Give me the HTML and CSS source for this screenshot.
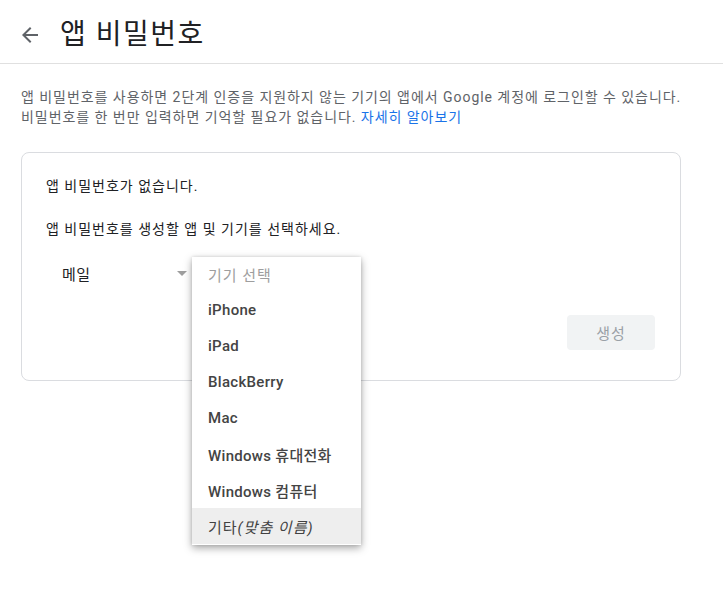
FILE: index.html
```html
<!DOCTYPE html>
<html lang="ko">
<head>
<meta charset="utf-8">
<title>앱 비밀번호</title>
<link rel="stylesheet" href="styles.css">
</head>
<body>
<header class="header">
  <span class="back">
    <svg width="24" height="24" viewBox="0 0 24 24"><path fill="#5f6368" d="M20 11H7.83l5.59-5.59L12 4l-8 8 8 8 1.41-1.41L7.83 13H20v-2z"/></svg>
  </span>
  <h1 class="title">앱 비밀번호</h1>
</header>
<p class="desc">앱 비밀번호를 사용하면 2단계 인증을 지원하지 않는 기기의 앱에서 Google 계정에 로그인할 수 있습니다.<br>비밀번호를 한 번만 입력하면 기억할 필요가 없습니다. <a class="link" href="#">자세히 알아보기</a></p>
<section class="card">
  <p class="line">앱 비밀번호가 없습니다.</p>
  <p class="line second">앱 비밀번호를 생성할 앱 및 기기를 선택하세요.</p>
  <div class="select-row">
    <div class="select">
      <span class="select-value">메일</span>
      <span class="caret"></span>
    </div>
    <ul class="menu">
      <li class="item placeholder">기기 선택</li>
      <li class="item">iPhone</li>
      <li class="item">iPad</li>
      <li class="item">BlackBerry</li>
      <li class="item">Mac</li>
      <li class="item">Windows 휴대전화</li>
      <li class="item">Windows 컴퓨터</li>
      <li class="item other">기타<em>(맞춤 이름)</em></li>
    </ul>
  </div>
  <div class="actions">
    <button class="btn" type="button">생성</button>
  </div>
</section>
</body>
</html>
```
FILE: styles.css
```css
* { box-sizing: border-box; }
html, body { margin: 0; padding: 0; background: #fff; }
body {
  min-height: 100vh;
  font-family: Roboto, "Noto Sans CJK KR", sans-serif;
  color: #202124;
  font-size: 14px;
}
.header {
  height: 64px;
  border-bottom: 1px solid #e0e0e0;
  display: flex;
  align-items: center;
  padding: 7px 0 0 18px;
}
.back { width: 24px; height: 24px; display: flex; }
.title {
  margin: 0 0 0 18px;
  font-size: 28px;
  font-weight: 400;
  line-height: 36px;
  letter-spacing: 1.5px;
  color: #202124;
}
.desc {
  margin: 23px 0 0;
  padding: 0 21px;
  font-size: 14px;
  line-height: 20px;
  letter-spacing: 0.95px;
  color: #5f6368;
}
.link { color: #1a73e8; text-decoration: none; }
.card {
  margin: 25px 0 0 21px;
  width: 660px;
  border: 1px solid #dadce0;
  border-radius: 8px;
  padding: 23px 25px 30px 24px;
}
.line { margin: 0; line-height: 20px; font-size: 14px; letter-spacing: 1px; color: #202124; }
.second { margin-top: 23px; }
.select-row { position: relative; margin-top: 16px; height: 36px; }
.select {
  width: 146px;
  height: 36px;
  display: flex;
  align-items: center;
  justify-content: space-between;
  padding: 0 5px 0 16px;
}
.select-value { font-size: 15px; letter-spacing: 0.5px; color: #202124; }
.caret {
  width: 0; height: 0;
  border-left: 5.5px solid transparent;
  border-right: 5.5px solid transparent;
  border-top: 5px solid #9e9e9e;
  margin-top: 1px;
}
.menu {
  position: absolute;
  left: 146px;
  top: 2px;
  width: 169px;
  margin: 0;
  padding: 0 0 1px;
  list-style: none;
  background: #fff;
  box-shadow: 0 3px 8px rgba(0,0,0,0.35), 0 0 3px rgba(0,0,0,0.12);
  z-index: 2;
}
.item {
  height: 36px;
  display: flex;
  align-items: center;
  padding: 0 16px;
  font-size: 15px;
  font-weight: 500;
  letter-spacing: 0.3px;
  color: #444444;
  white-space: nowrap;
}
.placeholder { height: 35px; font-weight: 400; color: #9e9e9e; letter-spacing: 1px; }
.other { background: #eeeeee; font-weight: 400; color: #424242; letter-spacing: 1px; }
.other em { font-style: italic; }
.actions { display: flex; justify-content: flex-end; margin-top: 24px; }
.btn {
  width: 88px;
  height: 35px;
  border: 0;
  border-radius: 4px;
  background: #f1f3f4;
  color: #9aa0a6;
  font-family: Roboto, "Noto Sans CJK KR", sans-serif;
  font-size: 15px;
  letter-spacing: 1px;
  padding: 0;
}
```
